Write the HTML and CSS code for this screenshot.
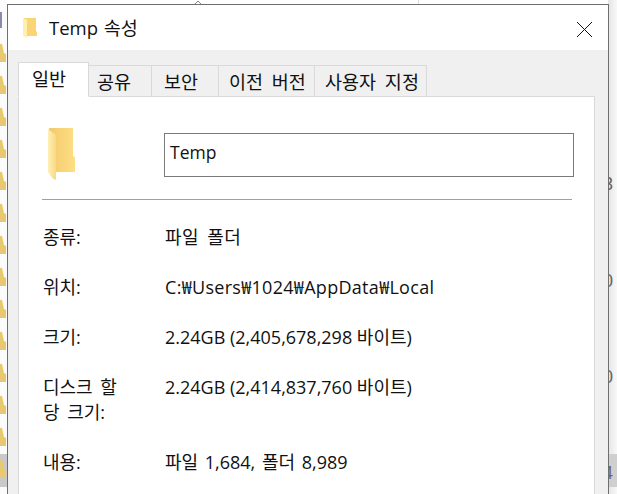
FILE: index.html
```html
<!DOCTYPE html>
<html lang="ko">
<head>
<meta charset="utf-8">
<title>Temp 속성</title>
<link rel="stylesheet" href="styles.css">
</head>
<body>
<div class="desktop">
  <div class="strip-left">
    <div class="row-highlight-left"></div>
    <div class="bg-mark"></div>
    <svg class="bg-folder" viewBox="0 0 6 18"><path d="M0 0h2l2 9 2 1v8H0z"/></svg>
    <svg class="bg-folder" viewBox="0 0 6 18"><path d="M0 0h2l2 9 2 1v8H0z"/></svg>
    <svg class="bg-folder" viewBox="0 0 6 18"><path d="M0 0h2l2 9 2 1v8H0z"/></svg>
    <svg class="bg-folder" viewBox="0 0 6 18"><path d="M0 0h2l2 9 2 1v8H0z"/></svg>
    <svg class="bg-folder" viewBox="0 0 6 18"><path d="M0 0h2l2 9 2 1v8H0z"/></svg>
    <svg class="bg-folder" viewBox="0 0 6 18"><path d="M0 0h2l2 9 2 1v8H0z"/></svg>
    <svg class="bg-folder" viewBox="0 0 6 18"><path d="M0 0h2l2 9 2 1v8H0z"/></svg>
    <svg class="bg-folder" viewBox="0 0 6 18"><path d="M0 0h2l2 9 2 1v8H0z"/></svg>
    <svg class="bg-folder" viewBox="0 0 6 18"><path d="M0 0h2l2 9 2 1v8H0z"/></svg>
    <svg class="bg-folder" viewBox="0 0 6 18"><path d="M0 0h2l2 9 2 1v8H0z"/></svg>
    <svg class="bg-folder" viewBox="0 0 6 18"><path d="M0 0h2l2 9 2 1v8H0z"/></svg>
    <svg class="bg-folder" viewBox="0 0 6 18"><path d="M0 0h2l2 9 2 1v8H0z"/></svg>
    <svg class="bg-folder" viewBox="0 0 6 18"><path d="M0 0h2l2 9 2 1v8H0z"/></svg>
    <svg class="bg-folder" viewBox="0 0 6 18"><path d="M0 0h2l2 9 2 1v8H0z"/></svg>
  </div>
  <div class="strip-right"></div>
  <div class="row-highlight-right"></div>
  <div class="top-line"></div>
  <svg class="sort-arrow" viewBox="0 0 10 5"><path d="M1 5 5 1l4 4"/></svg>
  <span class="bg-digit d1">3</span>
  <span class="bg-digit d2">0</span>
  <span class="bg-digit d3">0</span>
  <span class="bg-digit d4">4</span>

  <div class="window">
    <header class="titlebar">
      <svg class="title-icon" viewBox="0 0 14 20">
        <path class="f-back" d="M1 0h12v13l1 1v4H1z"/>
        <path class="f-front" d="M0 0l4 2v18l-4-2z"/>
      </svg>
      <span class="title-text">Temp 속성</span>
      <svg class="close" viewBox="0 0 15 15"><path d="M0 0l15 15M15 0L0 15"/></svg>
    </header>
    <div class="dialog-body">
      <nav class="tabs">
        <div class="tab active">일반</div>
        <div class="tab t2">공유</div>
        <div class="tab t3">보안</div>
        <div class="tab t4">이전 버전</div>
        <div class="tab t5">사용자 지정</div>
      </nav>
      <section class="panel">
        <div class="name-row">
          <svg class="big-folder" viewBox="0 0 28 52">
            <defs>
              <linearGradient id="bk" x1="0" y1="0" x2="1" y2="0">
                <stop offset="0" stop-color="#f3c96b"/>
                <stop offset="1" stop-color="#fedf85"/>
              </linearGradient>
              <linearGradient id="fr" x1="0" y1="0" x2="1" y2="0">
                <stop offset="0" stop-color="#fff0b3"/>
                <stop offset="1" stop-color="#f8d987"/>
              </linearGradient>
            </defs>
            <path fill="url(#bk)" d="M1 0h24v28l2 1v15H1z"/>
            <path fill="url(#fr)" d="M0 1l8 6v45l-3-1-5-7z"/>
          </svg>
          <div class="name-box">Temp</div>
        </div>
        <hr class="divider">
        <dl class="props">
          <div class="prop"><dt>종류:</dt><dd class="kind">파일 폴더</dd></div>
          <div class="prop"><dt>위치:</dt><dd class="path">C:₩Users₩1024₩AppData₩Local</dd></div>
          <div class="prop"><dt>크기:</dt><dd>2.24GB (2,405,678,298 바이트)</dd></div>
          <div class="prop tall"><dt>디스크 할<br>당 크기:</dt><dd>2.24GB (2,414,837,760 바이트)</dd></div>
          <div class="prop"><dt>내용:</dt><dd class="contents">파일 1,684, 폴더 8,989</dd></div>
        </dl>
      </section>
    </div>
  </div>
</div>
</body>
</html>
```
FILE: styles.css
```css
* { box-sizing: border-box; }
html, body { margin: 0; padding: 0; height: 100%; overflow: hidden; background: #fff; }
body { font-family: "Open Sans", "Noto Sans CJK KR", sans-serif; color: #111; }
.desktop { position: relative; width: 617px; height: 494px; overflow: hidden; background: #fff; }

.strip-left { position: absolute; left: 0; top: 0; width: 7px; height: 494px; display: flex; flex-direction: column; gap: 14px; padding-top: 44px; background: #fbfbfb; }
.bg-folder { width: 6px; height: 18px; flex: none; fill: #e8c96f; position: relative; }
.bg-mark { position: absolute; left: 0; top: 12px; width: 2px; height: 16px; background: #8a8ab0; }
.row-highlight-left { position: absolute; left: 0; top: 454px; width: 7px; height: 33px; background: #c9c9c9; }
.strip-right { position: absolute; left: 608px; top: 0; width: 9px; height: 494px; background: linear-gradient(90deg, #e4e4e4, #f8f8f8); }
.row-highlight-right { position: absolute; left: 608px; top: 454px; width: 9px; height: 33px; background: #cfcfcf; }
.top-line { position: absolute; left: 418px; top: 0; width: 1px; height: 5px; background: #e0e0e0; }
.sort-arrow { position: absolute; left: 193px; top: 0; width: 10px; height: 5px; fill: none; stroke: #888; }
.bg-digit { position: absolute; left: 603px; width: 14px; text-align: left; font: 18px/20px "Liberation Sans", sans-serif; color: #666; }
.d1 { top: 174px; } .d2 { top: 271px; } .d3 { top: 367px; } .d4 { top: 463px; }

.window { position: absolute; left: 7px; top: 4px; width: 602px; height: 500px; background: #f0f0f0; border: 1px solid #6f6f6f; display: flex; flex-direction: column; }
.titlebar { height: 45px; flex: none; background: #fff; display: flex; align-items: center; padding: 0 16px 0 15px; }
.title-icon { width: 14px; height: 20px; flex: none; margin-right: 12px; }
.f-back { fill: #fbd476; }
.f-front { fill: #fff0b0; }
.title-text { font-size: 18.5px; line-height: 24px; color: #111; flex: 1; white-space: nowrap; word-spacing: 1px; }
.close { width: 15px; height: 15px; flex: none; fill: none; stroke: #111; stroke-width: 1; margin-top: 3px; }

.dialog-body { flex: 1; padding: 13px 13px 0 10px; display: flex; flex-direction: column; }
.tabs { display: flex; align-items: flex-end; height: 34px; flex: none; position: relative; z-index: 1; margin-bottom: -1px; }
.tab { height: 32px; background: #f0f0f0; border: 1px solid #d9d9d9; border-left: 0; font-size: 18.5px; line-height: 31px; text-align: left; white-space: nowrap; color: #111; word-spacing: 4px; padding-left: 10px; }
.tab.active { height: 35px; width: 71px; background: #fff; border-left: 1px solid #d9d9d9; border-bottom: 1px solid #fff; line-height: 32px; padding-left: 13px; }
.t2 { width: 63px; padding-left: 8px; } .t3 { width: 67px; padding-left: 12px; } .t4 { width: 96px; } .t5 { width: 112px; }

.panel { flex: 1; background: #fff; border: 1px solid #d9d9d9; padding: 36px 21px 0 23px; }
.name-row { display: flex; align-items: flex-start; height: 66px; }
.big-folder { width: 28px; height: 52px; flex: none; margin: -5px 0 0 6px; }
.name-box { flex: none; margin-left: 88px; width: 410px; height: 44px; border: 1px solid #7a7a7a; font-size: 17.5px; line-height: 36px; padding-left: 5px; }
.divider { margin: 0; width: 530px; border: 0; border-top: 1px solid #a0a0a0; height: 0; }
.props { margin: 25px 0 0; font-size: 18px; line-height: 25px; }
.prop { display: flex; height: 50px; }
.prop.tall { height: 75px; }
dt { width: 123px; flex: none; word-spacing: 3px; padding-left: 1px; }
dd { margin: 0; white-space: nowrap; }
dd.kind { letter-spacing: .5px; word-spacing: 3px; }
dd.path { letter-spacing: .3px; }
dd.contents { word-spacing: 2px; }
```
